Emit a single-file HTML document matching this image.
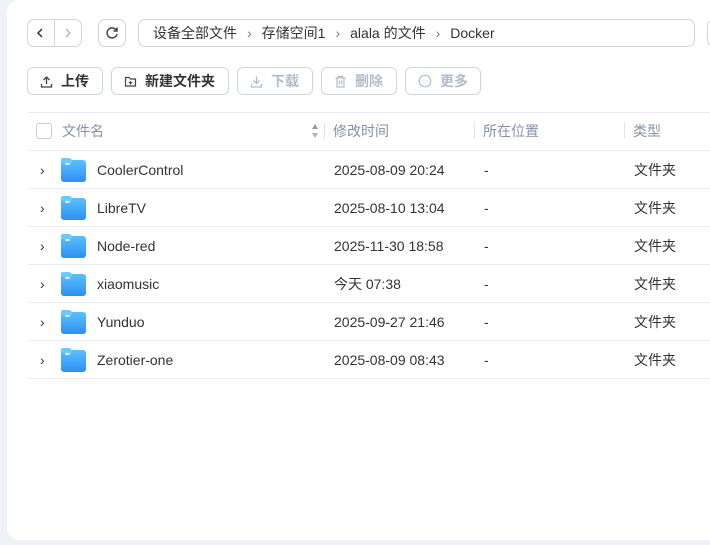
<!DOCTYPE html>
<html><head><meta charset="utf-8"><style>
*{box-sizing:border-box;margin:0;padding:0}
body{width:710px;height:545px;background:#eef1f6;font-family:"Liberation Sans","Noto Sans CJK SC",sans-serif;overflow:hidden;position:relative;color:#333}
.panel{position:absolute;left:7px;top:0;width:720px;height:540px;background:#fff;border-radius:12px 0 0 12px}
.b{position:absolute;border:1px solid #cfd6e2;border-radius:7px;background:#fff}
.t{position:absolute;font-size:14px;line-height:16px;height:16px;white-space:nowrap}
.btn{position:absolute;top:67px;height:28px;border:1px solid #cfd6e2;border-radius:6px;font-size:14px;line-height:16px;font-weight:bold;display:flex;align-items:center;padding-left:12px;gap:8px}
.dis{color:#b3bccb}
.line{position:absolute;left:28px;width:690px;height:1px;background:#e8ecf2}
.sep{position:absolute;top:122px;width:1px;height:17px;background:#e1e6ee}
.folder{position:absolute;left:61px;width:25px;height:22px;border-radius:3px;background:linear-gradient(180deg,#5cc0fb,#2f8ef5)}
.folder:before{content:"";position:absolute;left:0;top:-2px;width:11px;height:5px;background:#6ec9fc;border-radius:2px 3px 0 0}
.folder:after{content:"";position:absolute;left:4px;top:3px;width:5px;height:2px;background:#d6efff;border-radius:1px}
.chev{position:absolute;left:40px}
.bs{color:#777;margin:0 10px}
</style></head><body>
<div class="panel"></div>
<div class="b" style="left:27px;top:19px;width:55px;height:28px"></div>
<div style="position:absolute;left:54px;top:20px;width:1px;height:26px;background:#cfd6e2"></div>
<svg style="position:absolute;left:36px;top:27px" width="10" height="12"><path d="M6 2 L2 6 L6 10" stroke="#333" stroke-width="1.5" fill="none"/></svg>
<svg style="position:absolute;left:63px;top:27px" width="10" height="12"><path d="M3 2 L7 6 L3 10" stroke="#aab2c0" stroke-width="1.3" fill="none"/></svg>
<div class="b" style="left:98px;top:19px;width:28px;height:28px"></div>
<svg style="position:absolute;left:105px;top:26px" width="14" height="14"><path d="M11.5 4.5 A5 5 0 1 0 12 8" stroke="#444" stroke-width="1.5" fill="none"/><path d="M12 1.5 V5 H8.5" stroke="#444" stroke-width="1.5" fill="none"/></svg>
<div class="b" style="left:138px;top:19px;width:557px;height:28px"></div>
<div class="t" style="left:153px;top:25px;color:#333">设备全部文件<span class="bs">›</span>存储空间1<span class="bs">›</span>alala 的文件<span class="bs">›</span>Docker</div>
<div class="b" style="left:707px;top:19px;width:20px;height:28px"></div>

<div class="btn" style="left:27px;width:76px;color:#333"><svg width="13" height="13"><path d="M6.5 9 V2 M3.5 5 L6.5 2 L9.5 5 M1.5 9 V12 H11.5 V9" stroke="#444" stroke-width="1.3" fill="none"/></svg>上传</div>
<div class="btn" style="left:111px;width:118px;color:#333"><svg width="13" height="13"><path d="M1.5 2.5 H5 L6.5 4 H11.5 V11 H1.5 Z M6.5 6 V9.5 M4.7 7.7 H8.3" stroke="#444" stroke-width="1.2" fill="none"/></svg>新建文件夹</div>
<div class="btn dis" style="left:237px;width:76px"><svg width="13" height="13"><path d="M6.5 1.5 V8.5 M3.5 5.5 L6.5 8.5 L9.5 5.5 M1.5 9 V12 H11.5 V9" stroke="#b3bccb" stroke-width="1.3" fill="none"/></svg>下载</div>
<div class="btn dis" style="left:321px;width:76px"><svg width="13" height="13"><path d="M1.5 3 H11.5 M4.5 3 V1.5 H8.5 V3 M3 3 V12 H10 V3 M5.3 5.5 V9.5 M7.7 5.5 V9.5" stroke="#b3bccb" stroke-width="1.2" fill="none"/></svg>删除</div>
<div class="btn dis" style="left:405px;width:76px"><svg width="14" height="14"><circle cx="7" cy="7" r="5.8" stroke="#b3bccb" stroke-width="1.2" fill="none"/><path d="M4.5 7h.8M6.6 7h.8M8.7 7h.8" stroke="#b3bccb" stroke-width="1"/></svg>更多</div>

<div class="line" style="top:112px"></div>
<div style="position:absolute;left:36px;top:123px;width:16px;height:16px;border:1px solid #c5cdd9;border-radius:3px"></div>
<div class="t" style="left:62px;top:123px;color:#8592a6">文件名</div>
<svg style="position:absolute;left:311px;top:123px" width="8" height="16"><path d="M4 1 L7 6 H1 Z" fill="#8a9ab3"/><path d="M4 15 L7 10 H1 Z" fill="#a9b6c9"/></svg>
<div class="sep" style="left:324px"></div>
<div class="t" style="left:333px;top:123px;color:#8592a6">修改时间</div>
<div class="sep" style="left:474px"></div>
<div class="t" style="left:483px;top:123px;color:#8592a6">所在位置</div>
<div class="sep" style="left:624px"></div>
<div class="t" style="left:633px;top:123px;color:#8592a6">类型</div>
<div class="line" style="top:150px"></div>

<div class="t chev" style="top:162px">›</div><div class="folder" style="top:160px"></div><div class="t" style="left:97px;top:162px">CoolerControl</div><div class="t" style="left:334px;top:162px">2025-08-09 20:24</div><div class="t" style="left:484px;top:162px">-</div><div class="t" style="left:634px;top:162px">文件夹</div>
<div class="line" style="top:188px"></div>
<div class="t chev" style="top:200px">›</div><div class="folder" style="top:198px"></div><div class="t" style="left:97px;top:200px">LibreTV</div><div class="t" style="left:334px;top:200px">2025-08-10 13:04</div><div class="t" style="left:484px;top:200px">-</div><div class="t" style="left:634px;top:200px">文件夹</div>
<div class="line" style="top:226px"></div>
<div class="t chev" style="top:238px">›</div><div class="folder" style="top:236px"></div><div class="t" style="left:97px;top:238px">Node-red</div><div class="t" style="left:334px;top:238px">2025-11-30 18:58</div><div class="t" style="left:484px;top:238px">-</div><div class="t" style="left:634px;top:238px">文件夹</div>
<div class="line" style="top:264px"></div>
<div class="t chev" style="top:276px">›</div><div class="folder" style="top:274px"></div><div class="t" style="left:97px;top:276px">xiaomusic</div><div class="t" style="left:334px;top:276px">今天 07:38</div><div class="t" style="left:484px;top:276px">-</div><div class="t" style="left:634px;top:276px">文件夹</div>
<div class="line" style="top:302px"></div>
<div class="t chev" style="top:314px">›</div><div class="folder" style="top:312px"></div><div class="t" style="left:97px;top:314px">Yunduo</div><div class="t" style="left:334px;top:314px">2025-09-27 21:46</div><div class="t" style="left:484px;top:314px">-</div><div class="t" style="left:634px;top:314px">文件夹</div>
<div class="line" style="top:340px"></div>
<div class="t chev" style="top:352px">›</div><div class="folder" style="top:350px"></div><div class="t" style="left:97px;top:352px">Zerotier-one</div><div class="t" style="left:334px;top:352px">2025-08-09 08:43</div><div class="t" style="left:484px;top:352px">-</div><div class="t" style="left:634px;top:352px">文件夹</div>
<div class="line" style="top:378px"></div>
</body></html>
